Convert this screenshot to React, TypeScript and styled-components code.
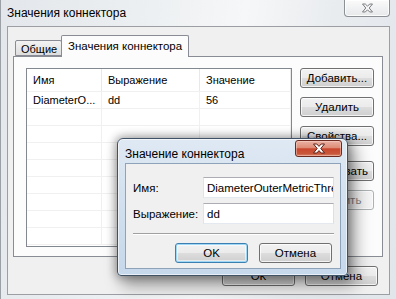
import React from "react";
import styled, { createGlobalStyle, css } from "styled-components";

const GlobalStyle = createGlobalStyle`
  html, body { margin: 0; padding: 0; background: #ffffff; }
  body {
    width: 396px; height: 299px; overflow: hidden;
    font-family: "Liberation Sans", Arial, sans-serif;
    color: #000;
  }
  * { box-sizing: border-box; }
`;

const Window = styled.div`
  position: relative;
  width: 396px;
  height: 299px;
  display: flex;
  flex-direction: column;
  background: linear-gradient(100deg, #e3e7eb 0%, #edf0f2 35%, #f6f7f8 55%, #e9ecef 75%, #e1e6eb 100%);
  border-left: 1px solid #9aa0a6;
  overflow: hidden;
`;

const TitleBar = styled.div`
  height: 26px;
  flex: 0 0 26px;
  display: flex;
  align-items: flex-start;
`;

const Title = styled.div`
  padding-left: 6px;
  line-height: 26px;
  font-size: 12px;
  color: #000;
  white-space: nowrap;
`;

const CloseButton = styled.div<{ $active?: boolean }>`
  margin-left: auto;
  width: 46px;
  height: 17px;
  display: flex;
  align-items: center;
  justify-content: center;
  ${(p) =>
    p.$active
      ? css`
          margin-top: 1px;
          margin-right: -1px;
          width: 47px;
          border: 1px solid #6b2a1f;
          border-radius: 3px;
          background: linear-gradient(#eab2a3 0%, #dd8c77 45%, #c8472d 52%, #c9573b 85%, #d98a6e 100%);
          box-shadow: inset 0 0 0 1px rgba(255, 220, 210, 0.45);
        `
      : css`
          margin-right: 6px;
          border: 1px solid #8c9196;
          border-top: none;
          border-radius: 0 0 4px 4px;
          background: linear-gradient(#fbfbfb, #e6e8ea);
          box-shadow: inset 0 0 0 1px rgba(255, 255, 255, 0.8);
        `}
`;

const Client = styled.div`
  flex: 1;
  margin: 0 6px 4px 6px;
  border: 1px solid #9b9fa4;
  background: #f0f0f0;
  display: flex;
  flex-direction: column;
  padding: 8px 6px 0 5px;
`;

const TabStrip = styled.div`
  display: flex;
  align-items: flex-end;
  height: 22px;
  padding-left: 2px;
  margin-bottom: -1px;
  position: relative;
  z-index: 1;
`;

const Tab = styled.div<{ $active?: boolean }>`
  display: flex;
  align-items: center;
  font-size: 11px;
  white-space: nowrap;
  border: 1px solid #898c95;
  border-radius: 2px 2px 0 0;
  ${(p) =>
    p.$active
      ? css`
          height: 22px;
          width: 128px;
          margin-left: -1px;
          padding: 0 0 2px 6px;
          border-bottom: none;
          background: #fcfcfc;
          font-size: 11.5px;
        `
      : css`
          height: 16px;
          width: 47px;
          margin-bottom: 1px;
          padding: 1px 0 0 5px;
          background: linear-gradient(#f3f3f3, #dedede);
        `}
`;

const Panel = styled.div`
  flex: 0 0 201px;
  border: 1px solid #898c95;
  background: #fcfcfc;
  display: flex;
  padding: 11px 8px 0 12px;
  gap: 8px;
`;

const ListView = styled.div`
  width: 266px;
  height: 179px;
  border: 1px solid #828790;
  background: #ffffff;
  overflow: hidden;
`;

const COLS = "75px 98px 1fr";

const HeaderRow = styled.div`
  display: grid;
  grid-template-columns: ${COLS};
  height: 23px;
  border-bottom: 1px solid #f0f0f0;
`;

const HeaderCell = styled.div`
  display: flex;
  align-items: center;
  padding-left: 6px;
  font-size: 11px;
  border-right: 1px solid #e8e8e8;
  white-space: nowrap;
`;

const Row = styled.div`
  display: grid;
  grid-template-columns: ${COLS};
  height: 17px;
  border-bottom: 1px solid #f0f0f0;
`;

const Cell = styled.div`
  display: flex;
  align-items: center;
  padding-left: 6px;
  font-size: 11px;
  border-right: 1px solid #f0f0f0;
  white-space: nowrap;
  overflow: hidden;
`;

const ButtonColumn = styled.div`
  display: flex;
  flex-direction: column;
  gap: 9px;
  width: 74px;
`;

const Button = styled.div<{ $default?: boolean; $disabled?: boolean; $w?: number; $gapBefore?: number }>`
  height: 20px;
  width: ${(p) => (p.$w ? `${p.$w}px` : "100%")};
  margin-top: ${(p) => p.$gapBefore ?? 0}px;
  display: flex;
  align-items: center;
  justify-content: center;
  font-size: 11.5px;
  white-space: nowrap;
  border-radius: 3px;
  border: 1px solid #707070;
  background: linear-gradient(#f2f2f2 0%, #ebebeb 50%, #dddddd 51%, #cfcfcf 100%);
  box-shadow: inset 0 0 0 1px rgba(255, 255, 255, 0.75);
  color: #000;
  ${(p) =>
    p.$default &&
    css`
      border-color: #3c7fb1;
      box-shadow: inset 0 0 0 1px #9fd7f7, inset 0 0 0 2px rgba(255, 255, 255, 0.5);
    `}
  ${(p) =>
    p.$disabled &&
    css`
      border-color: #adb2b5;
      background: #f4f4f4;
      color: #838383;
    `}
`;

const BottomRow = styled.div`
  display: flex;
  justify-content: flex-end;
  gap: 10px;
  margin-top: 9px;
  padding-right: 5px;
`;

/* inner dialog */
const Dialog = styled.div`
  position: absolute;
  left: 116px;
  top: 138px;
  width: 231px;
  height: 138px;
  border: 1px solid #3f5266;
  border-radius: 6px 6px 4px 4px;
  background: linear-gradient(180deg, #dfe9f4 0%, #d3e1ef 40%, #c6d8eb 100%);
  box-shadow: inset 0 0 0 1px rgba(255, 255, 255, 0.6), 0 0 9px 2px rgba(0, 0, 0, 0.3),
    6px 8px 16px 2px rgba(0, 0, 0, 0.35);
  display: flex;
  flex-direction: column;
  padding: 0 6px 6px 7px;
  z-index: 5;
`;

const DialogTitleBar = styled.div`
  height: 24px;
  flex: 0 0 24px;
  display: flex;
  align-items: flex-start;
`;

const DialogTitle = styled.div`
  font-size: 12px;
  line-height: 16px;
  margin-top: 7px;
  white-space: nowrap;
`;

const DialogClient = styled.div`
  flex: 1;
  border: 1px solid #8ea3b9;
  background: #f0f0f0;
  padding: 13px 6px 0 7px;
  display: flex;
  flex-direction: column;
`;

const Form = styled.div`
  display: grid;
  grid-template-columns: 70px 1fr;
  row-gap: 5px;
  align-items: center;
`;

const Label = styled.div`
  font-size: 11.5px;
  white-space: nowrap;
`;

const Input = styled.div`
  height: 21px;
  display: flex;
  align-items: center;
  padding-left: 3px;
  font-size: 11.5px;
  background: #ffffff;
  border: 1px solid #dbdfe6;
  border-top-color: #abadb3;
  border-left-color: #e2e3ea;
  border-bottom-color: #e3e9ef;
  white-space: nowrap;
  overflow: hidden;
`;

const Separator = styled.div`
  margin-top: 9px;
  height: 2px;
  border-top: 1px solid #a0a0a0;
  border-bottom: 1px solid #ffffff;
`;

const DialogButtons = styled.div`
  display: flex;
  justify-content: flex-end;
  gap: 11px;
  margin-top: 8px;
  padding-right: 2px;
`;

const XIcon: React.FC<{ active?: boolean }> = ({ active }) =>
  active ? (
    <svg width="14" height="11" viewBox="0 0 14 11">
      <path
        d="M1.5 1 H4.8 L7 3.4 L9.2 1 H12.5 L8.8 5.5 L12.5 10 H9.2 L7 7.6 L4.8 10 H1.5 L5.2 5.5 Z"
        fill="#ffffff"
        stroke="#5b2016"
        strokeWidth="1"
        strokeLinejoin="round"
      />
    </svg>
  ) : (
    <svg width="13" height="10" viewBox="0 0 13 10">
      <path
        d="M1.5 1 H4.3 L6.5 3.2 L8.7 1 H11.5 L8.2 5 L11.5 9 H8.7 L6.5 6.8 L4.3 9 H1.5 L4.8 5 Z"
        fill="#f6f6f6"
        stroke="#7a7d80"
        strokeWidth="1"
        strokeLinejoin="round"
      />
    </svg>
  );

const rows = [
  { name: "DiameterO...", expr: "dd", value: "56" },
  ...Array.from({ length: 8 }, () => ({ name: "", expr: "", value: "" })),
];

export default function App() {
  return (
    <>
      <GlobalStyle />
      <Window>
        <TitleBar>
          <Title>Значения коннектора</Title>
          <CloseButton>
            <XIcon />
          </CloseButton>
        </TitleBar>
        <Client>
          <TabStrip>
            <Tab>Общие</Tab>
            <Tab $active>Значения коннектора</Tab>
          </TabStrip>
          <Panel>
            <ListView>
              <HeaderRow>
                <HeaderCell>Имя</HeaderCell>
                <HeaderCell>Выражение</HeaderCell>
                <HeaderCell>Значение</HeaderCell>
              </HeaderRow>
              {rows.map((r, i) => (
                <Row key={i}>
                  <Cell>{r.name}</Cell>
                  <Cell>{r.expr}</Cell>
                  <Cell>{r.value}</Cell>
                </Row>
              ))}
            </ListView>
            <ButtonColumn>
              <Button>Добавить...</Button>
              <Button>Удалить</Button>
              <Button>Свойства...</Button>
              <Button $gapBefore={6}>Копировать</Button>
              <Button $disabled>Вставить</Button>
            </ButtonColumn>
          </Panel>
          <BottomRow>
            <Button $w={73}>ОК</Button>
            <Button $w={73}>Отмена</Button>
          </BottomRow>
        </Client>

        <Dialog>
          <DialogTitleBar>
            <DialogTitle>Значение коннектора</DialogTitle>
            <CloseButton $active>
              <XIcon active />
            </CloseButton>
          </DialogTitleBar>
          <DialogClient>
            <Form>
              <Label>Имя:</Label>
              <Input>DiameterOuterMetricThreadSize</Input>
              <Label>Выражение:</Label>
              <Input>dd</Input>
            </Form>
            <Separator />
            <DialogButtons>
              <Button $default $w={73}>
                OK
              </Button>
              <Button $w={73}>Отмена</Button>
            </DialogButtons>
          </DialogClient>
        </Dialog>
      </Window>
    </>
  );
}
